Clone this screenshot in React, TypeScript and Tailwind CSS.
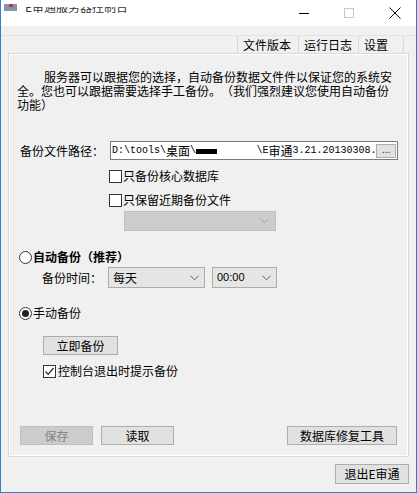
import React from "react";

const Chevron = ({ color = "#606060" }: { color?: string }) => (
  <svg width="9" height="6" viewBox="0 0 9 6" className="shrink-0">
    <path d="M0.5 0.8 L4.5 4.8 L8.5 0.8" fill="none" stroke={color} strokeWidth="1" />
  </svg>
);

const Checkbox = ({ checked = false }: { checked?: boolean }) => (
  <div className="w-[13px] h-[13px] border border-[#333333] bg-white flex items-center justify-center shrink-0">
    {checked && (
      <svg width="11" height="11" viewBox="0 0 11 11">
        <path d="M1.5 5.5 L4.2 8.3 L9.5 2" fill="none" stroke="#222" strokeWidth="1.2" />
      </svg>
    )}
  </div>
);

const Radio = ({ checked = false }: { checked?: boolean }) => (
  <div className="w-[13px] h-[13px] rounded-full border border-[#333333] bg-white flex items-center justify-center shrink-0">
    {checked && <div className="w-[7px] h-[7px] rounded-full bg-[#222]" />}
  </div>
);

const Btn = ({ children, w, disabled = false }: { children: React.ReactNode; w: string; disabled?: boolean }) => (
  <div
    className={
      "h-[19px] border flex items-center justify-center text-[12px] leading-none " +
      w +
      (disabled ? " bg-[#cccccc] border-[#bfbfbf] text-[#838383]" : " bg-[#e1e1e1] border-[#adadad] text-black")
    }
  >
    {children}
  </div>
);

export default function App() {
  return (
    <div className="w-[417px] h-[493px] bg-[#f0f0f0] border-l border-r border-b border-[#2b7fd4] flex flex-col overflow-hidden font-['Noto_Sans_CJK_SC',sans-serif] text-black text-[12px] [text-spacing-trim:space-all]">
      {/* title bar */}
      <div className="h-[26px] bg-white flex items-start shrink-0">
        <div className="ml-[3px] mt-[4px] w-[13px] h-[7px] bg-[#8595ad] flex justify-center">
          <div className="w-[4px] h-[3px] bg-[#d03030]" />
        </div>
        <div className="ml-[8px] mt-[7px] h-[6px] overflow-hidden">
          <div className="-mt-[6px] text-[12px] leading-[12px] text-[#333] whitespace-nowrap">E审通服务器控制台</div>
        </div>
        <div className="flex-1" />
        <div className="mt-[13px] w-[10px] h-px bg-black" />
        <div className="ml-[35px] mt-[8px] w-[10px] h-[10px] border border-[#c8c8c8]" />
        <svg className="ml-[35px] mt-[7px]" width="12" height="12" viewBox="0 0 12 12">
          <path d="M0.5 0.5 L11.5 11.5 M11.5 0.5 L0.5 11.5" stroke="#111" strokeWidth="1" />
        </svg>
        <div className="w-[15px]" />
      </div>

      {/* tab strip */}
      <div className="h-[9px] shrink-0" />
      <div className="h-[18px] flex shrink-0 border-t border-[#e3e3e3]">
        <div className="w-[236px]" />
        <div className="w-[61px] border-l border-[#d9d9d9] pl-[5px] leading-[17px]">文件版本</div>
        <div className="w-[60px] border-l border-[#d9d9d9] pl-[5px] leading-[17px]">运行日志</div>
        <div className="w-[46px] border-l border-r border-[#d9d9d9] pl-[5px] leading-[17px]">设置</div>
      </div>

      {/* panel */}
      <div className="ml-[7px] w-[401px] h-[404px] border border-[#d9d9d9] shrink-0">
        <div className="w-full h-full border border-white flex flex-col">
          <div className="mt-[15px] pl-[7px] leading-[14px] text-[12px]">
            <div className="pl-[27px] whitespace-nowrap">服务器可以跟据您的选择，自动备份数据文件件以保证您的系统安</div>
            <div className="whitespace-nowrap">全。您也可以跟据需要选择手工备份。（我们强烈建议您使用自动备份</div>
            <div className="whitespace-nowrap">功能）</div>
          </div>

          {/* path row */}
          <div className="mt-[29px] h-[19px] flex items-center pl-[10px]">
            <div className="w-[90px] whitespace-nowrap">备份文件路径：</div>
            <div className="w-[288px] h-[19px] border border-[#7a7a7a] bg-white flex items-center pl-[1px] overflow-hidden">
              <span className="font-['Liberation_Mono',monospace] text-[10px] whitespace-nowrap">D:\tools\</span>
              <span className="text-[12px] whitespace-nowrap leading-none">桌面</span>
              <span className="font-['Liberation_Mono',monospace] text-[10px]">\</span>
              <div className="w-[22px] h-[5px] bg-black mt-[2px]" />
              <div className="w-[40px]" />
              <span className="font-['Liberation_Mono',monospace] text-[10px]">\E</span>
              <span className="text-[12px] whitespace-nowrap leading-none">审通</span>
              <span className="font-['Liberation_Mono',monospace] text-[10px] whitespace-nowrap">3.21.20130308.</span>
              <div className="ml-auto mr-[1px] w-[20px] h-[14px] bg-[#e1e1e1] border border-[#adadad] text-[10px] leading-[8px] text-center text-[#333]">...</div>
            </div>
          </div>

          <div className="mt-[9px] h-[14px] flex items-center ml-[99px] gap-[1px]">
            <Checkbox />
            <span className="whitespace-nowrap">只备份核心数据库</span>
          </div>
          <div className="mt-[10px] h-[14px] flex items-center ml-[99px] gap-[1px]">
            <Checkbox />
            <span className="whitespace-nowrap">只保留近期备份文件</span>
          </div>
          <div className="mt-[4px] ml-[114px] w-[152px] h-[20px] bg-[#cccccc] border border-[#bfbfbf] flex items-center justify-end pr-[6px]">
            <Chevron color="#a0a0a0" />
          </div>

          {/* auto backup */}
          <div className="mt-[19px] h-[14px] flex items-center ml-[9px] gap-[1px]">
            <Radio />
            <span className="font-bold whitespace-nowrap">自动备份（推荐）</span>
          </div>
          <div className="mt-[3px] h-[21px] flex items-center ml-[32px]">
            <div className="w-[66px] whitespace-nowrap">备份时间：</div>
            <div className="w-[97px] h-[21px] bg-[#e5e5e5] border border-[#acacac] flex items-center pl-[4px] pr-[5px]">
              <span className="flex-1">每天</span>
              <Chevron />
            </div>
            <div className="ml-[7px] w-[65px] h-[21px] bg-[#e5e5e5] border border-[#acacac] flex items-center pl-[4px] pr-[5px]">
              <span className="flex-1 font-['Liberation_Sans',sans-serif] text-[11px]">00:00</span>
              <Chevron />
            </div>
          </div>

          {/* manual backup */}
          <div className="mt-[18px] h-[14px] flex items-center ml-[9px] gap-[1px]">
            <Radio checked />
            <span className="whitespace-nowrap">手动备份</span>
          </div>
          <div className="mt-[16px] ml-[33px]">
            <Btn w="w-[75px]">立即备份</Btn>
          </div>
          <div className="mt-[9px] h-[14px] flex items-center ml-[33px] gap-[2px]">
            <Checkbox checked />
            <span className="whitespace-nowrap">控制台退出时提示备份</span>
          </div>

          <div className="mt-auto mb-[10px] flex items-center ml-[10px] mr-[10px]">
            <Btn w="w-[73px]" disabled>保存</Btn>
            <div className="ml-[8px]">
              <Btn w="w-[73px]">读取</Btn>
            </div>
            <div className="ml-auto">
              <Btn w="w-[110px]">数据库修复工具</Btn>
            </div>
          </div>
        </div>
      </div>

      <div className="mt-[7px] flex justify-end mr-[7px]">
        <div className="h-[20px] w-[74px] bg-[#e1e1e1] border border-[#adadad] flex items-center justify-center text-[12px]">退出E审通</div>
      </div>
    </div>
  );
}
